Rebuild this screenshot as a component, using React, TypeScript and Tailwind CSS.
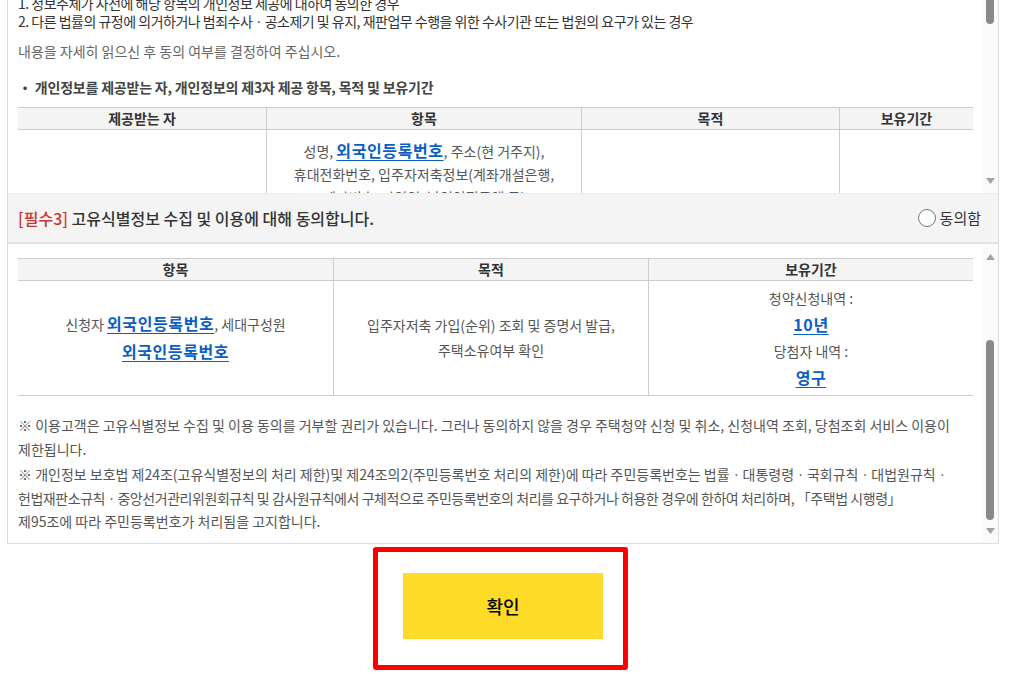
import React from "react";

const LINK = "font-bold text-[16px] text-[#0b5ec4] underline underline-offset-[3px] tracking-[0.6px]";

function DownArrow() {
  return (
    <svg width="9" height="6" viewBox="0 0 9 6" className="block">
      <path d="M0 0 L9 0 L4.5 6 Z" fill="#a3a3a3" />
    </svg>
  );
}
function UpArrow() {
  return (
    <svg width="9" height="6" viewBox="0 0 9 6" className="block">
      <path d="M0 6 L9 6 L4.5 0 Z" fill="#a3a3a3" />
    </svg>
  );
}

export default function App() {
  return (
    <div className="w-[1013px] h-[674px] overflow-hidden bg-white font-['Noto_Sans_CJK_KR','Noto_Sans',sans-serif] text-[14px] text-[#333]">
      <div className="ml-[7px] w-[992px] border-x border-b border-[#dddddd]">
        {/* top scroll box */}
        <div className="flex h-[193px]">
          <div className="flex-1 overflow-hidden px-[10px]">
            <div className="mt-[-6px]">
              <p className="leading-[18px] whitespace-nowrap tracking-[-0.5px] text-[#333]">1. 정보주체가 사전에 해당 항목의 개인정보 제공에 대하여 동의한 경우</p>
              <p className="leading-[18px] whitespace-nowrap tracking-[-0.5px] text-[#333]">2. 다른 법률의 규정에 의거하거나 범죄수사ㆍ공소제기 및 유지, 재판업무 수행을 위한 수사기관 또는 법원의 요구가 있는 경우</p>
              <p className="mt-[12px] leading-[18px] whitespace-nowrap text-[#666]">내용을 자세히 읽으신 후 동의 여부를 결정하여 주십시오.</p>
              <p className="mt-[18px] leading-[18px] whitespace-nowrap font-bold tracking-[-0.2px] text-[#444]">・ 개인정보를 제공받는 자, 개인정보의 제3자 제공 항목, 목적 및 보유기간</p>
              <div className="mt-[11px] w-[955px]">
                <div className="flex h-[23px] border-y border-[#cccccc] bg-[#f4f4f4] font-bold text-[#333] leading-[21px] text-center">
                  <div className="w-[248px]">제공받는 자</div>
                  <div className="w-[315px] border-l border-[#cccccc]">항목</div>
                  <div className="w-[258px] border-l border-[#cccccc]">목적</div>
                  <div className="w-[134px] border-l border-[#cccccc]">보유기간</div>
                </div>
                <div className="flex h-[120px] text-center text-[#555]">
                  <div className="w-[248px]"></div>
                  <div className="w-[315px] border-l border-[#cccccc] pt-[9px] leading-[23px] whitespace-nowrap">
                    <p>
                      성명, <span className={LINK}>외국인등록번호</span>, 주소(현 거주지),
                    </p>
                    <p>휴대전화번호, 입주자저축정보(계좌개설은행,</p>
                    <p>계좌번호, 가입일, 납입인정금액 등)</p>
                  </div>
                  <div className="w-[258px] border-l border-[#cccccc]"></div>
                  <div className="w-[134px] border-l border-[#cccccc]"></div>
                </div>
              </div>
            </div>
          </div>
          <div className="relative w-[15px] bg-[#fafafa]">
            <div className="ml-[3px] h-[24px] w-[8px] rounded-b-full bg-[#888888]"></div>
            <div className="absolute left-[3px] top-[178px]">
              <DownArrow />
            </div>
          </div>
        </div>

        {/* band */}
        <div className="flex h-[51px] items-center justify-between border-t border-b-2 border-t-[#ececec] border-b-[#e3e3e3] bg-[#f4f4f4] pl-[10px] pr-[17px]">
          <p className="text-[16px] font-medium text-[#333]">
            <span className="text-[#cc3333]">[필수3]</span> 고유식별정보 수집 및 이용에 대해 동의합니다.
          </p>
          <label className="flex items-center gap-[4px] text-[15px] text-[#333]">
            <span className="block h-[18px] w-[18px] rounded-full border border-[#767676] bg-white"></span>
            동의함
          </label>
        </div>

        {/* second scroll box */}
        <div className="flex h-[299px]">
          <div className="flex-1 overflow-hidden px-[10px] pt-[14px]">
            <div className="w-[955px]">
              <div className="flex h-[23px] border-y border-[#cccccc] bg-[#f4f4f4] font-bold text-[#333] leading-[21px] text-center">
                <div className="w-[315px]">항목</div>
                <div className="w-[315px] border-l border-[#cccccc]">목적</div>
                <div className="w-[325px] border-l border-[#cccccc]">보유기간</div>
              </div>
              <div className="flex h-[115px] border-b border-[#cccccc] text-center text-[#555]">
                <div className="flex w-[315px] flex-col justify-center leading-[27px] whitespace-nowrap">
                  <p>
                    신청자 <span className={LINK}>외국인등록번호</span>, 세대구성원
                  </p>
                  <p>
                    <span className={LINK}>외국인등록번호</span>
                  </p>
                </div>
                <div className="flex w-[315px] flex-col justify-center border-l border-[#cccccc] leading-[25px] whitespace-nowrap">
                  <p>입주자저축 가입(순위) 조회 및 증명서 발급,</p>
                  <p>주택소유여부 확인</p>
                </div>
                <div className="flex w-[325px] flex-col justify-center border-l border-[#cccccc] leading-[26px] whitespace-nowrap">
                  <p>청약신청내역 :</p>
                  <p>
                    <span className={LINK}>10년</span>
                  </p>
                  <p>당첨자 내역 :</p>
                  <p>
                    <span className={LINK}>영구</span>
                  </p>
                </div>
              </div>
            </div>
            <div className="mt-[18px] leading-[23.5px] whitespace-nowrap text-[#555]">
              <p>
                ※ 이용고객은 고유식별정보 수집 및 이용 동의를 거부할 권리가 있습니다. 그러나 동의하지 않을 경우 주택청약 신청 및 취소, 신청내역 조회, 당첨조회 서비스 이용이
                <br />
                제한됩니다.
              </p>
              <p className="mt-[2px]">
                ※ 개인정보 보호법 제24조(고유식별정보의 처리 제한)및 제24조의2(주민등록번호 처리의 제한)에 따라 주민등록번호는 법률ㆍ대통령령ㆍ국회규칙ㆍ대법원규칙ㆍ
                <br />
                <span className="tracking-[-0.45px]">
                  헌법재판소규칙ㆍ중앙선거관리위원회규칙 및 감사원규칙에서 구체적으로 주민등록번호의 처리를 요구하거나 허용한 경우에 한하여 처리하며, 「주택법 시행령」
                </span>
                <br />
                제95조에 따라 주민등록번호가 처리됨을 고지합니다.
              </p>
            </div>
          </div>
          <div className="relative w-[15px] bg-[#fafafa]">
            <div className="absolute left-[3px] top-[10px]">
              <UpArrow />
            </div>
            <div className="absolute left-[3px] top-[96px] h-[180px] w-[8px] rounded-full bg-[#888888]"></div>
            <div className="absolute left-[3px] top-[284px]">
              <DownArrow />
            </div>
          </div>
        </div>
      </div>

      {/* confirm area */}
      <div className="ml-[373px] mt-[3px] h-[123px] w-[255px] rounded-[3px] border-[5px] border-[#ff0000] pl-[25px] pt-[21px]">
        <button className="flex h-[66px] w-[200px] items-center justify-center bg-[#fedb27] text-[18px] font-medium text-black">
          확인
        </button>
      </div>
    </div>
  );
}
